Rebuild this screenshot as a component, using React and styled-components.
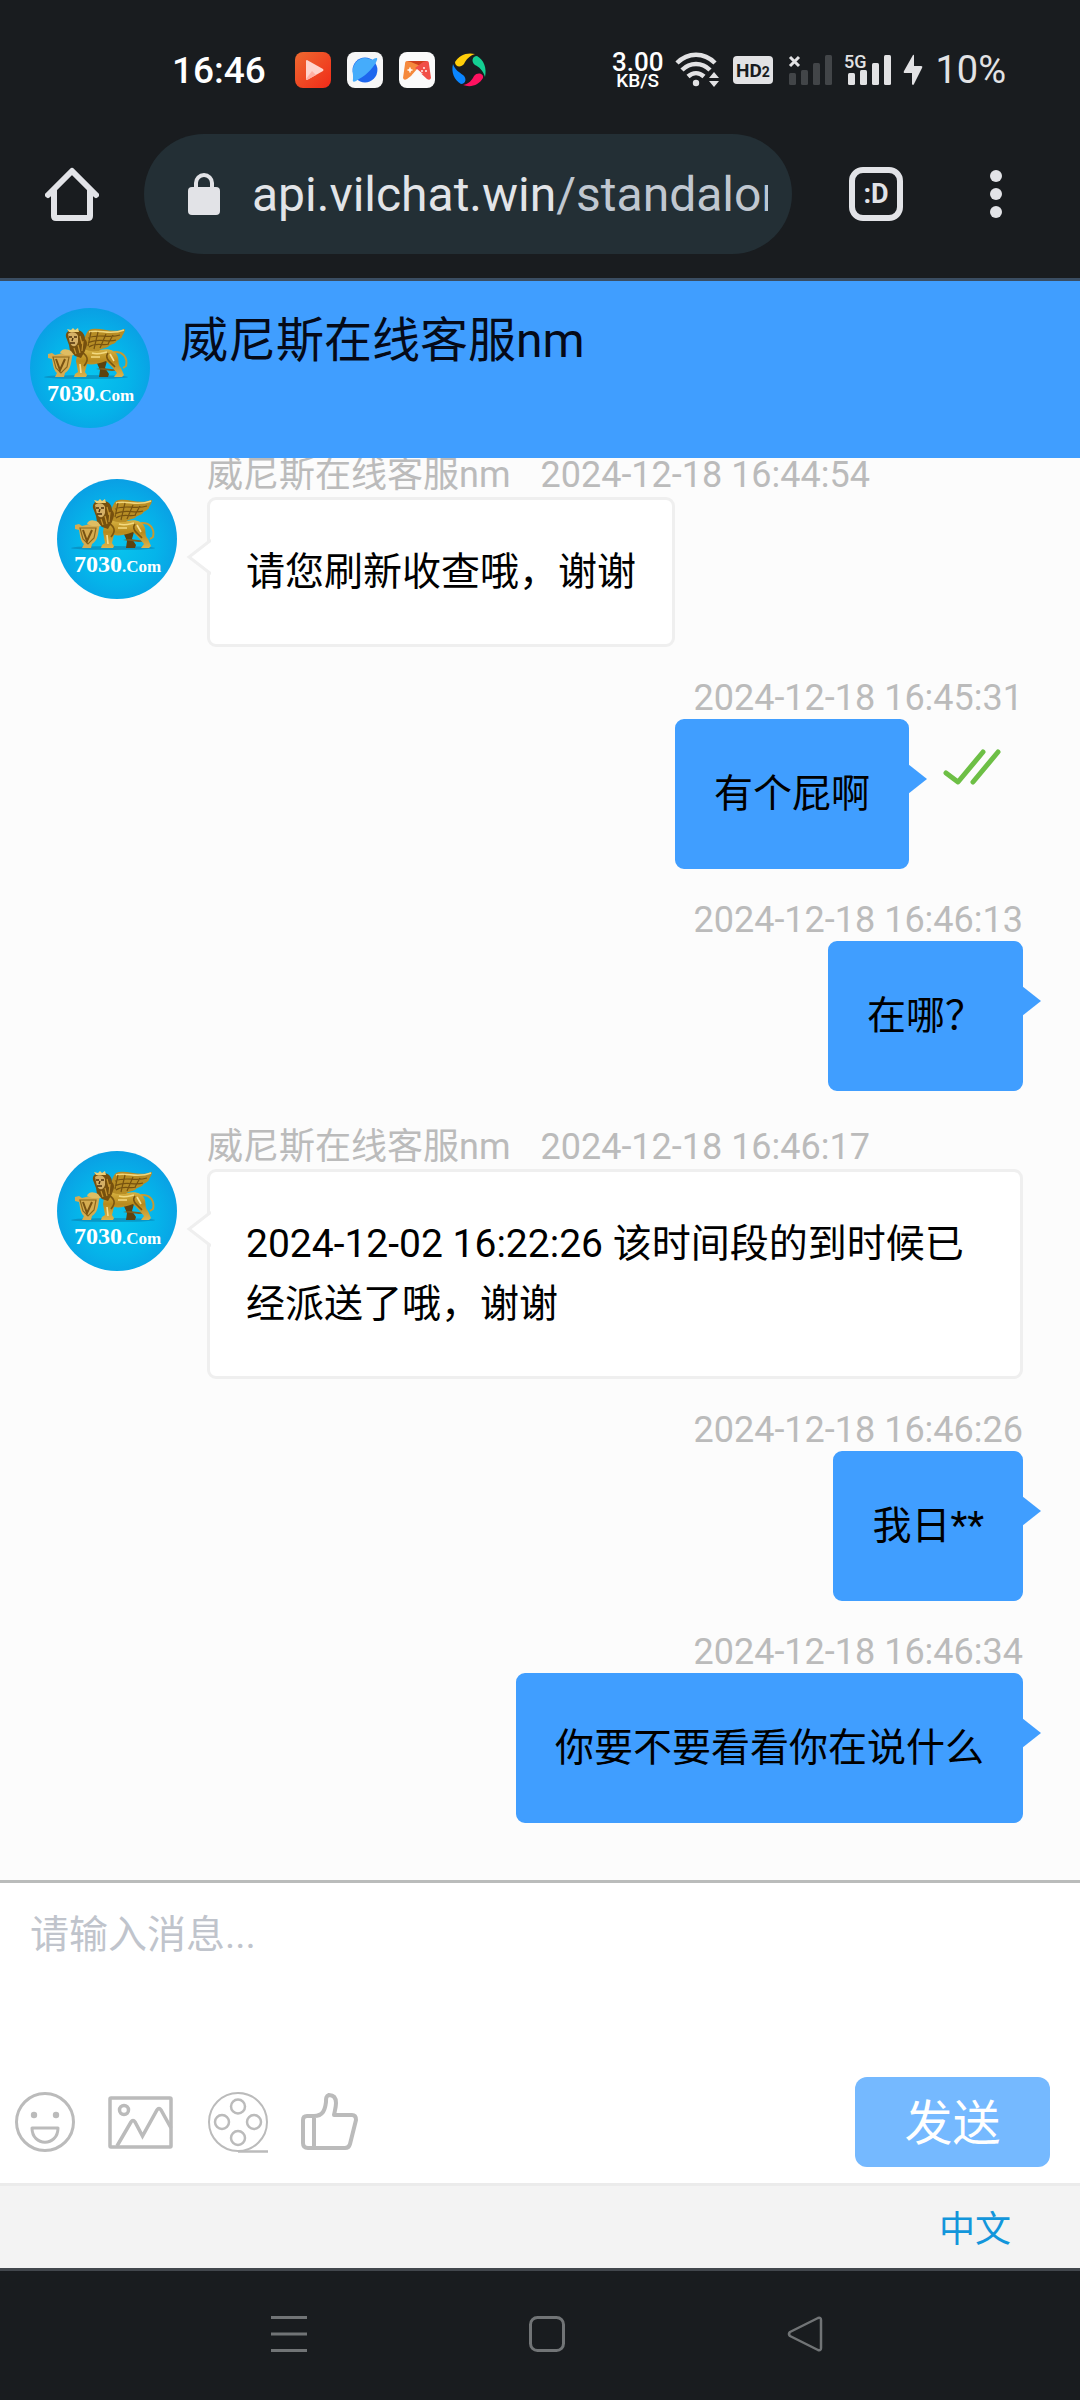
import React, { useState } from "react";
import styled, { createGlobalStyle } from "styled-components";

const GlobalStyle = createGlobalStyle`
  * {
    box-sizing: border-box;
  }

  body {
    margin: 0;
    font-family: Roboto, "Noto Sans CJK SC", sans-serif;
    background: #fcfcfc;
  }

  button,
  textarea {
    font-family: inherit;
    border: none;
    padding: 0;
    margin: 0;
    background: none;
  }

  svg {
    display: block;
    flex-shrink: 0;
  }
`;

const Screen = styled.div`
  display: flex;
  flex-direction: column;
  height: 100vh;
`;

const StatusBar = styled.div`
  display: flex;
  align-items: center;
  justify-content: space-between;
  height: 110px;
  padding: 30px 74px 0 172px;
  background: #191c1f;
  color: #fff;
`;

const StatusGroup = styled.div`
  display: flex;
  align-items: center;
  gap: ${(props) => props.$gap}px;
`;

const Clock = styled.span`
  font-size: 37px;
  font-weight: 500;
  margin-right: 13px;
`;

const Speed = styled.div`
  display: flex;
  flex-direction: column;
  align-items: center;
  font-weight: 500;
  font-size: 19px;
  line-height: 16px;

  strong {
    font-size: 26px;
    line-height: 22px;
    font-weight: 500;
  }
`;

const Battery = styled.span`
  font-size: 38px;
  color: #e2e2e4;
`;

const BrowserBar = styled.div`
  display: flex;
  align-items: center;
  padding: 24px 78px 24px 45px;
  background: #191c1f;
  border-bottom: 3px solid #3a4d62;
  box-sizing: content-box;
`;

const IconButton = styled.button`
  display: flex;
  align-items: center;
  justify-content: center;
  cursor: pointer;
`;

const AddressBar = styled.button`
  display: flex;
  align-items: center;
  flex: 1;
  min-width: 0;
  height: 120px;
  margin: 0 57px 0 45px;
  padding: 0 24px 0 44px;
  border-radius: 60px;
  background: #232f35;
  cursor: pointer;
`;

const Url = styled.span`
  flex: 1;
  min-width: 0;
  margin-left: 32px;
  padding-top: 2px;
  overflow: hidden;
  white-space: nowrap;
  text-align: left;
  font-size: 48px;
  line-height: 60px;
  color: #e2e4e8;

  span {
    color: #c0c7d0;
  }
`;

const TabsButton = styled(IconButton)`
  width: 54px;
  height: 54px;
  margin-right: 87px;
  border: 6px solid #e2e3e7;
  border-radius: 14px;
  color: #e2e3e7;
  font-size: 27px;
  font-weight: 700;
`;

const ChatHeader = styled.header`
  display: flex;
  align-items: flex-start;
  gap: 30px;
  height: 177px;
  flex-shrink: 0;
  padding: 27px 30px;
  background: #409eff;
`;

const Title = styled.h1`
  margin: 0;
  font-size: 48px;
  font-weight: 400;
  line-height: 66px;
  color: #050a18;
`;

const Messages = styled.main`
  display: flex;
  flex-direction: column;
  justify-content: flex-end;
  flex: 1 1 0;
  min-height: 0;
  overflow: hidden;
  gap: 30px;
  padding: 0 57px;
  padding-bottom: 57px;
`;

const IncomingRow = styled.div`
  display: flex;
  align-items: flex-start;
  gap: 30px;

  > svg {
    margin-top: 30px;
  }
`;

const IncomingBody = styled.div`
  display: flex;
  flex-direction: column;
  align-items: flex-start;
  min-width: 0;
`;

const OutgoingRow = styled.div`
  display: flex;
  flex-direction: column;
  align-items: flex-end;
`;

const OutgoingBody = styled.div`
  display: flex;
  align-items: flex-start;
`;

const Meta = styled.div`
  display: flex;
  gap: 30px;
  height: ${(props) => (props.$tall ? 48 : 42)}px;
  padding-top: ${(props) => (props.$tall ? 5 : 0)}px;
  font-size: 36px;
  line-height: 42px;
  color: #bbb;
  white-space: nowrap;
`;

const Bubble = styled.div`
  position: relative;
  padding: 42px 36px;
  border: 3px solid ${(props) => (props.$mine ? "#409eff" : "#efefef")};
  border-radius: 9px;
  background: ${(props) => (props.$mine ? "#409eff" : "#fff")};
  color: #000;
  font-size: 39px;
  line-height: 60px;
`;

const LeftArrow = styled.svg`
  position: absolute;
  left: -24px;
  top: 39px;
`;

const RightArrow = styled.svg`
  position: absolute;
  right: -21px;
  top: 42px;
`;

const ReadMark = styled.svg`
  margin: 30px 21px 0 33px;
`;

const Composer = styled.form`
  display: flex;
  flex-direction: column;
  border-top: 3px solid #babcbb;
  background: #fff;
`;

const MessageInput = styled.textarea`
  width: 100%;
  height: 194px;
  padding: 23px 30px;
  resize: none;
  outline: none;
  font-size: 39px;
  line-height: 58px;
  color: #333;

  &::placeholder {
    color: #c0c4cc;
    opacity: 1;
  }
`;

const Tools = styled.div`
  display: flex;
  align-items: center;
  gap: 33px;
  padding: 0 30px 16px 15px;
`;

const SendButton = styled.button`
  width: 195px;
  height: 90px;
  margin-left: auto;
  padding-top: 3px;
  border-radius: 12px;
  background: #75b9ff;
  color: #fff;
  font-size: 48px;
  line-height: 60px;
  cursor: pointer;
`;

const Footer = styled.footer`
  display: flex;
  align-items: center;
  justify-content: flex-end;
  height: 85px;
  padding: 0 69px 3px;
  border-top: 3px solid #ebebeb;
  background: #f3f3f3;
`;

const LanguageLink = styled.a`
  color: #1296db;
  font-size: 36px;
  text-decoration: none;
`;

const NavBar = styled.nav`
  display: flex;
  align-items: center;
  justify-content: center;
  gap: 222px;
  height: 132px;
  padding: 0 0 3px 14px;
  border-top: 3px solid #42474d;
  background: #191c1f;
`;

const AGENT = "威尼斯在线客服nm";

const messages = [
  { id: 1, from: "agent", time: "2024-12-18 16:44:54", text: "请您刷新收查哦，谢谢" },
  { id: 2, from: "me", time: "2024-12-18 16:45:31", text: "有个屁啊", read: true },
  { id: 3, from: "me", time: "2024-12-18 16:46:13", text: "在哪？" },
  {
    id: 4,
    from: "agent",
    time: "2024-12-18 16:46:17",
    text: "2024-12-02 16:22:26 该时间段的到时候已经派送了哦，谢谢",
  },
  { id: 5, from: "me", time: "2024-12-18 16:46:26", text: "我日**" },
  { id: 6, from: "me", time: "2024-12-18 16:46:34", text: "你要不要看看你在说什么" },
];

function Avatar({ id }) {
  const sky = `sky-${id}`;
  const gold = `gold-${id}`;
  return (
    <svg width="120" height="120" viewBox="0 0 120 120" role="img" aria-label="7030.Com">
      <defs>
        <radialGradient id={sky} cx="0.5" cy="0.55" r="0.55">
          <stop offset="0" stopColor="#08c4ee" />
          <stop offset="0.6" stopColor="#05b4ea" />
          <stop offset="1" stopColor="#0a9fe4" />
        </radialGradient>
        <linearGradient id={gold} x1="0" y1="0" x2="0" y2="1">
          <stop offset="0" stopColor="#d9b545" />
          <stop offset="0.45" stopColor="#b88a1c" />
          <stop offset="1" stopColor="#dcb44c" />
        </linearGradient>
      </defs>
      <circle cx="60" cy="60" r="60" fill={`url(#${sky})`} />
      <ellipse cx="56" cy="69" rx="42" ry="2" fill="#0b7fae" opacity="0.6" />
      {/* far legs */}
      <path d="M66 53 L77 53 L75 60 L79 66 L78 69 L69 69 L70 62 Z" fill="#5d4310" />
      <path d="M72 60 L90 62 L82 63 L66 61 Z" fill="#7d5d1c" />
      {/* tail */}
      <path d="M84 44 C93 43 98 50 96 58 L93 60" fill="none" stroke="#c39a35" strokeWidth="2" />
      {/* body with near legs */}
      <path
        d="M48 41 C56 38 62 43 70 42 C78 40 86 42 88 49 C89 54 88 57 91 60 L94 67 L92 69 L84 69 L87 65 L82 59 L76 53 C68 56 62 57 57 56 L55 64 L57 67 L56 69 L44 69 L45 66 L48 64 L46 53 Z"
        fill={`url(#${gold})`}
      />
      <path d="M52 44 C59 49 58 53 54 58 M78 45 C74 50 80 54 85 59" fill="none" stroke="#7c5710" strokeWidth="1.6" />
      <path d="M62 45 C68 47 72 45 77 44 M61 49 L70 49" fill="none" stroke="#f3d97f" strokeWidth="1.6" />
      <path d="M50 56 L51 65 M80 46 L84 53" stroke="#f7df92" strokeWidth="1.6" />
      {/* wing */}
      <path
        d="M54 41 C53 30 57 21 62 21 C72 19 81 26 95 21 C95 25 92 27 92 29 C90 32 87 32 86 34 C83 37 80 36 78 39 C74 41 71 40 69 43 C64 43 60 44 54 41 Z"
        fill="#b78d25"
      />
      <path d="M59 24 C70 21 80 28 94 22" fill="none" stroke="#f1d77d" strokeWidth="1.5" />
      <path
        d="M58 30 C69 25 79 31 90 27 M58 35 C68 29 77 35 86 32 M59 39 C66 34 72 38 79 36 M61 24 L58 38 M68 24 L64 41 M76 26 L70 40 M83 27 L78 36"
        fill="none"
        stroke="#775310"
        strokeWidth="1.2"
      />
      {/* mane and head */}
      <path
        d="M36 29 C35 24 40 21 44 22 C50 21 55 25 55 31 C59 35 56 39 55 43 L51 50 L45 48 L40 43 L39 37 Z"
        fill="#76500e"
      />
      <path d="M39 24 L37 21 L41 22 L43 20 L45 22 L48 20 L49 24 Z" fill="#edcf75" />
      <path d="M38 26 C41 23 47 24 48 28 L48 34 C46 40 42 39 40 35 Z" fill="#d5b066" />
      <path d="M39 29 L42 29 M44 29 L47 29 M43 30 L42 33 M40 35 L45 35" stroke="#4d300c" strokeWidth="1.4" />
      <path d="M50 28 L52 36 M48 37 L50 45 M44 40 L46 46 M53 33 L52 43" stroke="#c5942f" strokeWidth="1.2" />
      {/* shield */}
      <path
        d="M18 46 L22 45 L25 47 L33 45 L41 47 L43 46 L42 49 C41 57 40 62 35 65 L34 69 L25 69 L27 65 C23 62 23 55 22 51 L18 50 Z"
        fill="#d5ac51"
      />
      <path d="M23 49 L39 49 L37 59 L31 65 L26 60 Z" fill="none" stroke="#8c671c" strokeWidth="1.2" />
      <path d="M26 51 L30 62 L35 51" fill="none" stroke="#795313" strokeWidth="2" />
      <path d="M30 45 C32 40 37 41 41 43 L44 47 L35 47 Z" fill="#dfbd62" />
      <text x="17" y="93" fill="#fff" fontFamily='"Liberation Serif", serif' fontWeight="700" fontSize="24">
        7030<tspan fontSize="17">.Com</tspan>
      </text>
    </svg>
  );
}

function PlayerIcon() {
  return (
    <svg width="36" height="36" viewBox="0 0 36 36">
      <defs>
        <linearGradient id="player" x1="0" y1="0" x2="1" y2="1">
          <stop offset="0" stopColor="#ee6a30" />
          <stop offset="1" stopColor="#f02a18" />
        </linearGradient>
      </defs>
      <rect width="36" height="36" rx="8" fill="url(#player)" />
      <path d="M12 8 L28 17 Q29 18 28 19 L12 28 Q11 28 11 27 L11 9 Q11 8 12 8 Z" fill="#ffd3cb" />
      <path d="M11 27 L17 19 L21 23 L12 28 Z" fill="#ffb0a4" />
    </svg>
  );
}

function PlanetIcon() {
  return (
    <svg width="36" height="36" viewBox="0 0 36 36">
      <rect width="36" height="36" rx="8" fill="#f6f6f6" />
      <circle cx="18" cy="18" r="12.4" fill="#1d66ee" />
      <path
        d="M6 23 C4 14 10 6 18 6 C21 6 23 7 25 8 C28 6 31 5 30 8 C28 14 20 23 12 27 C8 30 5 31 6 27 Z"
        fill="#45acfb"
      />
    </svg>
  );
}

function GamepadIcon() {
  return (
    <svg width="36" height="36" viewBox="0 0 36 36">
      <rect width="36" height="36" rx="8" fill="#fafafa" />
      <path d="M8 9 L28 9 L24 18 L12 18 Z" fill="#cf3f1c" />
      <path d="M8 9 Q6 9 6 12 L4 26 Q5 29 8 27 L24 15 L12 10 Z" fill="#f5893c" />
      <path d="M28 9 Q30 9 30 12 L32 26 Q31 29 28 27 L16 16 L24 10 Z" fill="#f14f48" />
      <path d="M18 17 L24 22 L18 21 L12 24 Z" fill="#fafafa" />
      <path d="M11 15.5 V20.5 M8.5 18 H13.5" stroke="#fff" strokeWidth="1.5" />
      <g fill="#fff">
        <circle cx="25" cy="16" r="0.9" />
        <circle cx="23" cy="19" r="0.9" />
        <circle cx="27" cy="19" r="0.9" />
      </g>
    </svg>
  );
}

function SwirlIcon() {
  return (
    <svg width="36" height="36" viewBox="0 0 36 36">
      <path d="M4 10 C8 3 16 0 24 2 C18 4 15 8 13 12 C10 16 4 15 4 10 Z" fill="#ffce0a" />
      <path d="M26 4 C33 8 36 16 34 25 C32 18 28 15 24 13 C20 10 21 4 26 4 Z" fill="#14cf92" />
      <path d="M32 26 C28 33 20 36 12 33 C18 32 21 28 23 24 C26 20 33 21 32 26 Z" fill="#ff1260" />
      <path d="M10 32 C3 28 0 20 2 12 C4 18 8 20 12 23 C16 26 15 32 10 32 Z" fill="#0a86ff" />
    </svg>
  );
}

function WifiIcon() {
  return (
    <svg width="46" height="36" viewBox="0 0 46 36">
      <g fill="none" stroke="#e2e2e4" strokeWidth="4.5">
        <path d="M2 11 C13 0 29 0 40 11" />
        <path d="M7 18 C15 10 27 10 35 18" />
        <path d="M13 24.5 C18 20 24 20 29 24.5" />
      </g>
      <circle cx="21" cy="31" r="3.2" fill="#e2e2e4" />
      <path d="M39 20 L44 26 H34 Z M39 35 L34 29 H44 Z" fill="#e2e2e4" />
    </svg>
  );
}

function HdIcon() {
  return (
    <svg width="40" height="28" viewBox="0 0 40 28">
      <rect width="40" height="28" rx="4" fill="#e2e2e4" />
      <text x="3" y="21" fill="#191c1f" fontWeight="700" fontSize="19">
        HD<tspan fontSize="14">2</tspan>
      </text>
    </svg>
  );
}

function SignalIcon({ label }) {
  const color = label ? "#e2e2e4" : "#424548";
  return (
    <svg width="47" height="36" viewBox="0 0 47 36">
      <g fill={color}>
        <rect x="4" y="21" width="7" height="12" rx="1.5" />
        <rect x="16" y="18" width="7" height="15" rx="1.5" />
        <rect x="28" y="11" width="7" height="22" rx="1.5" />
        <rect x="40" y="3" width="7" height="30" rx="1.5" />
      </g>
      {label ? (
        <text x="0" y="16" fontSize="18" fontWeight="500" fill="#e2e2e4" stroke="#191c1f" strokeWidth="3" paintOrder="stroke">
          {label}
        </text>
      ) : (
        <path d="M5 5 L14 14 M14 5 L5 14" stroke="#e2e2e4" strokeWidth="3" />
      )}
    </svg>
  );
}

function IncomingMessage({ message }) {
  return (
    <IncomingRow>
      <Avatar id={message.id} />
      <IncomingBody>
        <Meta $tall>
          <span>{AGENT}</span>
          <time>{message.time}</time>
        </Meta>
        <Bubble>
          <LeftArrow width="25" height="36" viewBox="0 0 25 36">
            <path d="M25 1 L3 18 L25 35" fill="#fff" stroke="#efefef" strokeWidth="3" />
            <path d="M22 5 H25 V31 H22 Z" fill="#fff" />
          </LeftArrow>
          {message.text}
        </Bubble>
      </IncomingBody>
    </IncomingRow>
  );
}

function OutgoingMessage({ message }) {
  return (
    <OutgoingRow>
      <Meta>
        <time>{message.time}</time>
      </Meta>
      <OutgoingBody>
        <Bubble $mine>
          {message.text}
          <RightArrow width="19" height="30" viewBox="0 0 19 30">
            <path d="M0 0 L19 15 L0 30 Z" fill="#409eff" />
          </RightArrow>
        </Bubble>
        {message.read && (
          <ReadMark width="60" height="38" viewBox="0 0 60 38" aria-label="已读">
            <path
              d="M4 24 L16 33 L41 3 M31 33 L56 3"
              fill="none"
              stroke="#6dbf45"
              strokeWidth="5"
              strokeLinecap="round"
              strokeLinejoin="round"
            />
          </ReadMark>
        )}
      </OutgoingBody>
    </OutgoingRow>
  );
}

export default function App() {
  const [draft, setDraft] = useState("");

  function handleSubmit(e) {
    e.preventDefault();
    setDraft("");
  }

  return (
    <Screen>
      <GlobalStyle />
      <StatusBar>
        <StatusGroup $gap={16}>
          <Clock>16:46</Clock>
          <PlayerIcon />
          <PlanetIcon />
          <GamepadIcon />
          <SwirlIcon />
        </StatusGroup>
        <StatusGroup $gap={12}>
          <Speed>
            <strong>3.00</strong>
            KB/S
          </Speed>
          <WifiIcon />
          <HdIcon />
          <SignalIcon />
          <SignalIcon label="5G" />
          <svg width="20" height="32" viewBox="0 0 20 32">
            <path d="M10 1 L1 17 Q0 19 2 19 L9 19 L9 30 Q10 32 11 30 L19 14 Q20 12 18 12 L11 12 L11 2 Q11 0 10 1 Z" fill="#e2e2e4" />
          </svg>
          <Battery>10%</Battery>
        </StatusGroup>
      </StatusBar>

      <BrowserBar>
        <IconButton aria-label="主页">
          <svg width="54" height="54" viewBox="0 0 54 54" fill="none" stroke="#e2e3e7" strokeWidth="6">
            <path d="M3 28 L27 4 L51 28" strokeLinecap="round" strokeLinejoin="round" />
            <path d="M9 23 V49 Q9 51 11 51 H43 Q45 51 45 49 V23" />
          </svg>
        </IconButton>
        <AddressBar>
          <svg width="32" height="42" viewBox="0 0 32 42">
            <rect y="14" width="32" height="28" rx="4" fill="#e2e3e7" />
            <path d="M8 16 V10 A8 8 0 0 1 24 10 V16" fill="none" stroke="#e2e3e7" strokeWidth="4" />
          </svg>
          <Url>
            api.vilchat.win<span>/standalone</span>
          </Url>
        </AddressBar>
        <TabsButton>:D</TabsButton>
        <IconButton aria-label="更多">
          <svg width="12" height="48" viewBox="0 0 12 48" fill="#e2e3e7">
            <circle cx="6" cy="6" r="6" />
            <circle cx="6" cy="24" r="6" />
            <circle cx="6" cy="42" r="6" />
          </svg>
        </IconButton>
      </BrowserBar>

      <ChatHeader>
        <Avatar id="header" />
        <Title>{AGENT}</Title>
      </ChatHeader>

      <Messages>
        {messages.map((message) =>
          message.from === "me" ? (
            <OutgoingMessage key={message.id} message={message} />
          ) : (
            <IncomingMessage key={message.id} message={message} />
          )
        )}
      </Messages>

      <Composer onSubmit={handleSubmit}>
        <MessageInput
          aria-label="消息"
          placeholder="请输入消息..."
          value={draft}
          onChange={(e) => setDraft(e.target.value)}
        />
        <Tools>
          <IconButton type="button" aria-label="表情">
            <svg width="60" height="60" viewBox="0 0 60 60" fill="none" stroke="#bbb" strokeWidth="3">
              <circle cx="30" cy="30" r="28.5" />
              <circle cx="19" cy="23" r="3.2" fill="#bbb" stroke="none" />
              <circle cx="41" cy="23" r="3.2" fill="#bbb" stroke="none" />
              <path d="M17 36 H43 C43 55 17 55 17 36 Z" strokeLinejoin="round" />
            </svg>
          </IconButton>
          <IconButton type="button" aria-label="图片">
            <svg width="65" height="53" viewBox="0 0 65 53" fill="none" stroke="#bbb" strokeWidth="3.5">
              <rect x="2" y="2" width="61" height="49" rx="1" />
              <circle cx="16" cy="14" r="4.5" />
              <path d="M9 50 L23 26 Q25 23 27 26 L34.5 40 L49 14 Q51 11 53 14 L63 32" />
            </svg>
          </IconButton>
          <IconButton type="button" aria-label="视频">
            <svg width="62" height="61" viewBox="0 0 62 61" fill="none" stroke="#bbb" strokeWidth="2">
              <circle cx="32" cy="30" r="29" />
              <g strokeWidth="2.5">
                <circle cx="32" cy="14.5" r="7" />
                <circle cx="16" cy="30" r="7" />
                <circle cx="48" cy="30" r="7" />
                <circle cx="32" cy="46" r="7" />
              </g>
              <path d="M32 59.5 H62" strokeWidth="2.5" />
            </svg>
          </IconButton>
          <IconButton type="button" aria-label="点赞">
            <svg width="57" height="58" viewBox="0 0 57 58" fill="none" stroke="#bbb" strokeWidth="4" strokeLinejoin="round">
              <path d="M13 23 H6 Q2 23 2 27 V50 Q2 55 7 55 H44 Q48 55 49 51 L55 27 Q55 22 51 22 H33 C34 17 35 14 35 10 C35 3 31 2 28 2 C25 3 25 5 25 9 C24 17 22 23 13 23 V55" />
            </svg>
          </IconButton>
          <SendButton type="submit">发送</SendButton>
        </Tools>
      </Composer>

      <Footer>
        <LanguageLink href="#">中文</LanguageLink>
      </Footer>

      <NavBar>
        <IconButton aria-label="菜单">
          <svg width="36" height="36" viewBox="0 0 36 36" stroke="#717476" strokeWidth="3">
            <path d="M0 1.5 H36 M0 18 H36 M0 34.5 H36" />
          </svg>
        </IconButton>
        <IconButton aria-label="桌面">
          <svg width="36" height="36" viewBox="0 0 36 36" fill="none" stroke="#717476" strokeWidth="3">
            <rect x="1.5" y="1.5" width="33" height="33" rx="7" />
          </svg>
        </IconButton>
        <IconButton aria-label="返回">
          <svg width="36" height="36" viewBox="0 0 36 36" fill="none" stroke="#717476" strokeWidth="2.5" strokeLinejoin="round">
            <path d="M31 2 L3 16 Q1 18 3 20 L31 34 Q34 35 34 32 V4 Q34 1 31 2 Z" />
          </svg>
        </IconButton>
      </NavBar>
    </Screen>
  );
}
